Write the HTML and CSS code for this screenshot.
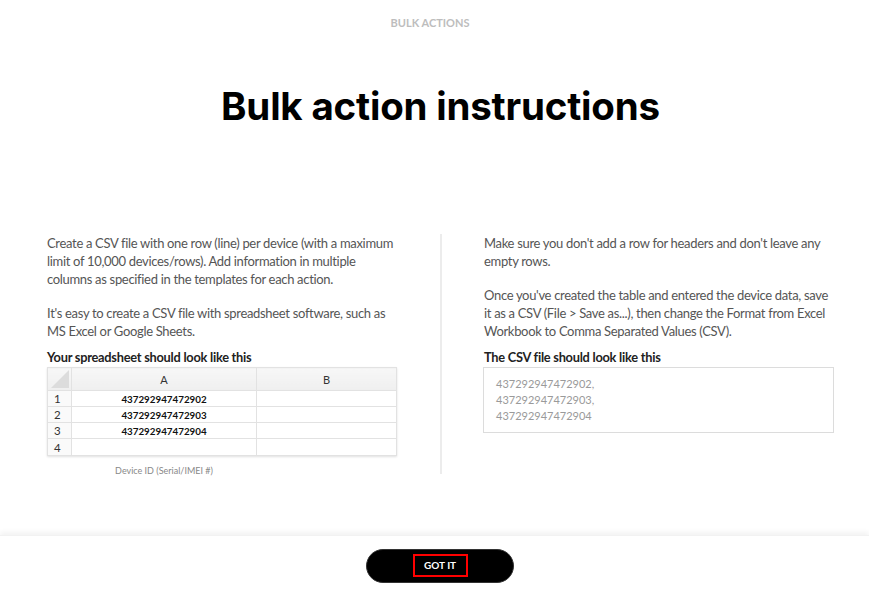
FILE: index.html
```html
<!DOCTYPE html>
<html lang="en">
<head>
<meta charset="utf-8">
<title>Bulk action instructions</title>
<link rel="stylesheet" href="styles.css">
</head>
<body>
<div class="page">
  <main class="main">
    <div class="eyebrow">BULK ACTIONS</div>
    <h1 class="title">Bulk action instructions</h1>
    <div class="columns">
      <section class="col">
        <p class="para">Create a CSV file with one row (line) per device (with a maximum limit of 10,000 devices/rows). Add information in multiple columns as specified in the templates for each action.</p>
        <p class="para">It's easy to create a CSV file with spreadsheet software, such as MS Excel or Google Sheets.</p>
        <div class="label">Your spreadsheet should look like this</div>
        <table class="sheet">
          <tr class="sheet-head">
            <th class="corner"><span class="tri"></span></th>
            <th class="cola">A</th>
            <th class="colb">B</th>
          </tr>
          <tr><td class="rn">1</td><td class="val">437292947472902</td><td></td></tr>
          <tr><td class="rn">2</td><td class="val">437292947472903</td><td></td></tr>
          <tr><td class="rn">3</td><td class="val">437292947472904</td><td></td></tr>
          <tr class="last"><td class="rn">4</td><td></td><td></td></tr>
        </table>
        <div class="caption">Device ID (Serial/IMEI #)</div>
      </section>
      <div class="divider"></div>
      <section class="col">
        <p class="para">Make sure you don't add a row for headers and don't leave any empty rows.</p>
        <p class="para">Once you've created the table and entered the device data, save it as a CSV (File &gt; Save as...), then change the Format from Excel Workbook to Comma Separated Values (CSV).</p>
        <div class="label">The CSV file should look like this</div>
        <div class="csv">437292947472902,<br>437292947472903,<br>437292947472904</div>
      </section>
    </div>
  </main>
  <footer class="footer">
    <button class="btn"><span class="btn-text">GOT IT</span></button>
  </footer>
</div>
</body>
</html>
```

FILE: styles.css
```css
* { box-sizing: border-box; }
html, body { margin: 0; padding: 0; background: #fff; }
body { font-family: "Lato", "Noto Sans", sans-serif; }
.page { height: 594px; display: flex; flex-direction: column; overflow: hidden; }
.main { flex: 1; display: flex; flex-direction: column; }
.eyebrow {
  text-align: center; font-size: 11px; font-weight: 700; color: #bdbdbd;
  margin-top: 16px; line-height: 14px; padding-right: 9px;
}
.title {
  text-align: center; margin: 52px 0 0; font-family: "Inter", sans-serif;
  font-weight: 700; font-size: 38.5px; line-height: 48px; color: #000; letter-spacing: -0.2px;
  padding-left: 12px;
}
.columns { display: flex; margin-top: 104px; padding-left: 47px; }
.col { width: 352px; }
.divider { width: 2px; background: #ececec; margin: 0 42px 0 41px; height: 240px; }
.para {
  margin: 0 0 16px; font-size: 13px; line-height: 18px; color: #555; letter-spacing: -0.32px;
}
.label {
  font-size: 12.8px; font-weight: 700; color: #222; line-height: 16px; letter-spacing: -0.25px;
  margin-top: -7px; margin-bottom: 2px;
}
.sheet {
  width: 350px; border-collapse: collapse; border: 1px solid #cfcfcf;
  box-shadow: 0 1px 2px rgba(0,0,0,0.12); font-size: 10px; color: #111;
}
.sheet th, .sheet td { border: 1px solid #e2e2e2; padding: 0; }
.sheet-head th { height: 23px; background: linear-gradient(#f7f7f7, #efefef); font-weight: 400; color: #333; font-size: 11px; }
.corner { width: 24px; position: relative; }
.tri {
  position: absolute; right: 2px; bottom: 2px; width: 0; height: 0;
  border-left: 18px solid transparent; border-bottom: 18px solid #dcdcdc;
}
.cola { width: 185px; }
.sheet td { height: 16px; }
.sheet .last td { height: 17px; }
.rn { padding-left: 6px !important; text-align: left; color: #333; font-size: 11.5px; background: #fafafa; }
.val { text-align: center; font-weight: 700; font-size: 9.8px; }
.caption { width: 234px; text-align: center; font-size: 9px; color: #888; margin-top: 9px; }
.csv {
  width: 351px; margin-left: -1px; border: 1px solid #dcdcdc; height: 66px; padding: 8px 12px; font-size: 11px;
  line-height: 16px; color: #9a9a9a;
}
.footer {
  height: 59px; display: flex; justify-content: center; align-items: center;
  box-shadow: 0 -3px 5px rgba(0,0,0,0.05); border-top: 1px solid #f2f2f2;
}
.btn {
  width: 148px; height: 34px; border-radius: 17px; background: #000; border: 1px solid #333;
  display: flex; justify-content: center; align-items: center; padding: 0; margin: 1px 0 0 11px;
}
.btn-text {
  width: 55px; height: 23px; border: 2px solid #ff0000; color: #fff;
  font-family: "Lato", sans-serif; font-weight: 700; font-size: 10px; line-height: 19px;
  text-align: center;
}
```
